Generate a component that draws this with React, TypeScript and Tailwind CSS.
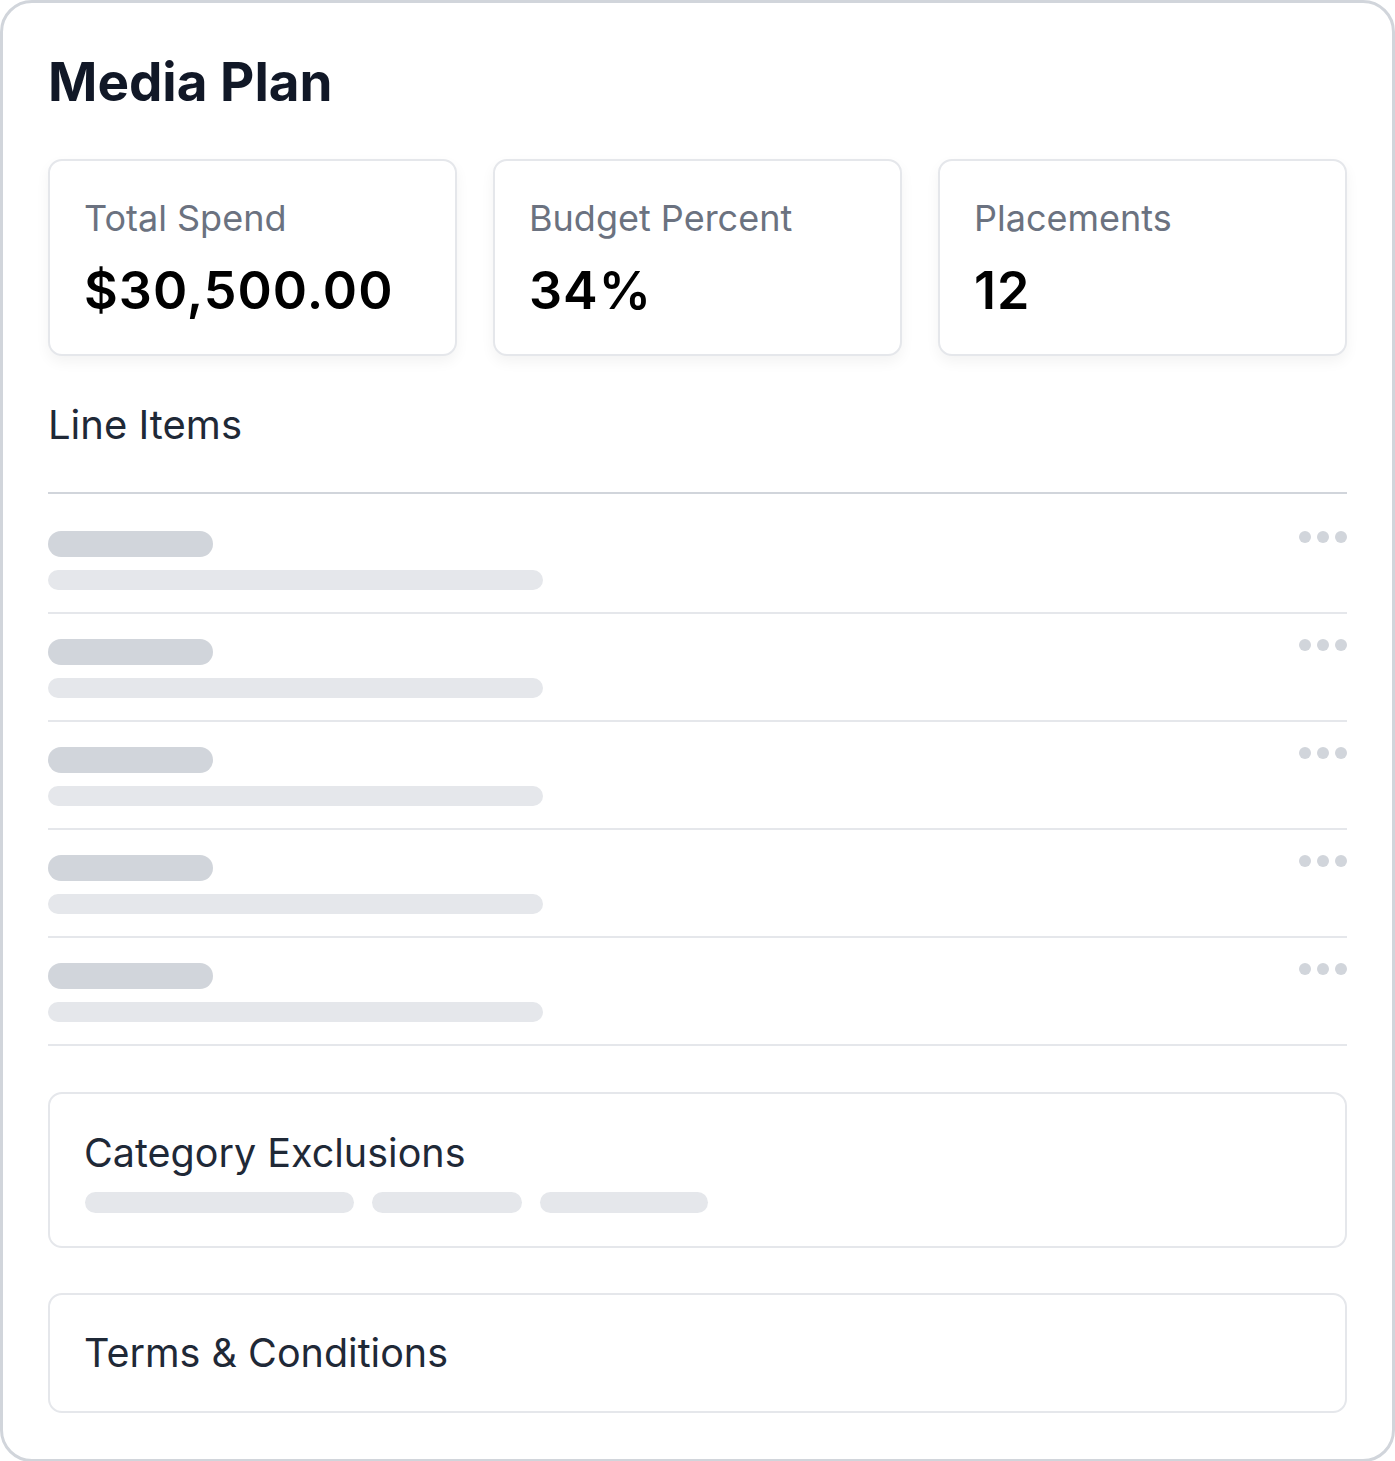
import { Fragment } from 'react'

const stats = [
  { label: 'Total Spend', value: '$30,500.00' },
  { label: 'Budget Percent', value: '34%' },
  { label: 'Placements', value: '12' },
]

// placeholder rows while line items load
const rows = [0, 1, 2, 3, 4]

function Dots() {
  return (
    <div className="flex gap-[6px]">
      <span className="w-[12px] h-[12px] rounded-full bg-[#d1d5db]" />
      <span className="w-[12px] h-[12px] rounded-full bg-[#d1d5db]" />
      <span className="w-[12px] h-[12px] rounded-full bg-[#d1d5db]" />
    </div>
  )
}

export default function App() {
  return (
    <div className="bg-white" style={{ fontFamily: 'Inter, "Noto Sans", sans-serif' }}>
      <div className="w-[1395px] rounded-[32px] border-[3px] border-[#d1d5db] bg-white px-[45px] pt-[53px] pb-[46px]">
        <h1 className="text-[53px] leading-none font-bold text-[#111827]">Media Plan</h1>

        {/* stat cards */}
        <div className="mt-[50px] grid grid-cols-3 gap-[36px]">
          {stats.map((s) => (
            <div
              key={s.label}
              className="rounded-[14px] border-2 border-[#e5e7eb] bg-white px-[34px] pt-[39px] pb-[37px] shadow-[0_6px_14px_rgba(0,0,0,0.05)]"
            >
              <p className="text-[36px] leading-none text-[#6b7280]">{s.label}</p>
              <p className="mt-[29px] text-[52px] leading-none font-semibold tracking-[1px] text-black">{s.value}</p>
            </div>
          ))}
        </div>

        <h2 className="mt-[49px] text-[40px] leading-none text-[#1f2937]">Line Items</h2>
        <div className="mt-[47px] border-t-2 border-[#d1d5db] pt-[12px]">
          {rows.map((r) => (
            <Fragment key={r}>
              <div className="flex items-start justify-between border-b-2 border-[#e5e7eb] pt-[25px] pb-[22px]">
                <div>
                  <div className="w-[165px] h-[26px] rounded-full bg-[#d1d5db]" />
                  <div className="mt-[13px] w-[495px] h-[20px] rounded-full bg-[#e5e7eb]" />
                </div>
                <Dots />
              </div>
            </Fragment>
          ))}
        </div>

        <div className="mt-[46px] rounded-[14px] border-2 border-[#e5e7eb] px-[34px] pt-[40px] pb-[33px]">
          <h3 className="text-[39.5px] leading-none text-[#1f2937]">Category Exclusions</h3>
          <div className="mt-[18px] ml-[1px] flex gap-[18px]">
            <div className="w-[269px] h-[21px] rounded-full bg-[#e5e7eb]" />
            <div className="w-[150px] h-[21px] rounded-full bg-[#e5e7eb]" />
            <div className="w-[168px] h-[21px] rounded-full bg-[#e5e7eb]" />
          </div>
        </div>

        <div className="mt-[45px] rounded-[14px] border-2 border-[#e5e7eb] px-[34px] pt-[39px] pb-[38px]">
          <h3 className="text-[39.5px] leading-none text-[#1f2937]">Terms &amp; Conditions</h3>
        </div>
      </div>
    </div>
  )
}
